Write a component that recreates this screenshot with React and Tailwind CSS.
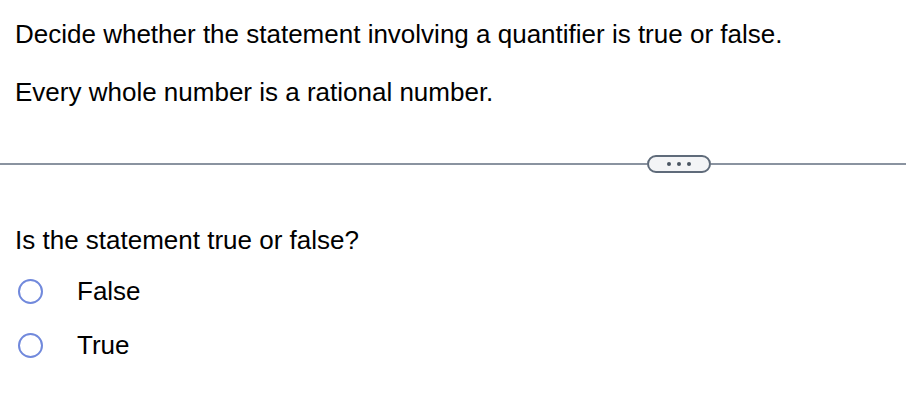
export default function App() {
  const options = ["False", "True"];
  return (
    <div className="w-[906px] h-[404px] bg-white text-black font-['Liberation_Sans',Arial,sans-serif] text-[26px]">
      <div className="pt-[19px] px-[15px]">
        <p className="leading-[30px]">Decide whether the statement involving a quantifier is true or false.</p>
        <p className="mt-[28px] leading-[30px]">Every whole number is a rational number.</p>
      </div>

      {/* divider */}
      <div className="mt-[48px] flex items-center">
        <div className="h-[2px] w-[647px] bg-[#8a93a0]" />
        <button className="w-[64px] h-[18px] rounded-full border-2 border-[#5f6b7a] bg-[#f3f4f6] flex items-center justify-center gap-[6px]">
          <span className="w-[4px] h-[4px] rounded-full bg-[#4b5563]" />
          <span className="w-[4px] h-[4px] rounded-full bg-[#4b5563]" />
          <span className="w-[4px] h-[4px] rounded-full bg-[#4b5563]" />
        </button>
        <div className="h-[2px] flex-1 bg-[#8a93a0]" />
      </div>

      <div className="px-[15px] pt-[52px]">
        <p className="leading-[30px]">Is the statement true or false?</p>
        <div className="mt-[21px] flex flex-col gap-[24px]">
          {options.map((o) => (
            <label key={o} className="flex items-center h-[30px]">
              <span className="ml-[3px] w-[25px] h-[25px] rounded-full border-2 border-[#7189dc] bg-white" />
              <span className="ml-[34px] leading-[30px]">{o}</span>
            </label>
          ))}
        </div>
      </div>
    </div>
  );
}
